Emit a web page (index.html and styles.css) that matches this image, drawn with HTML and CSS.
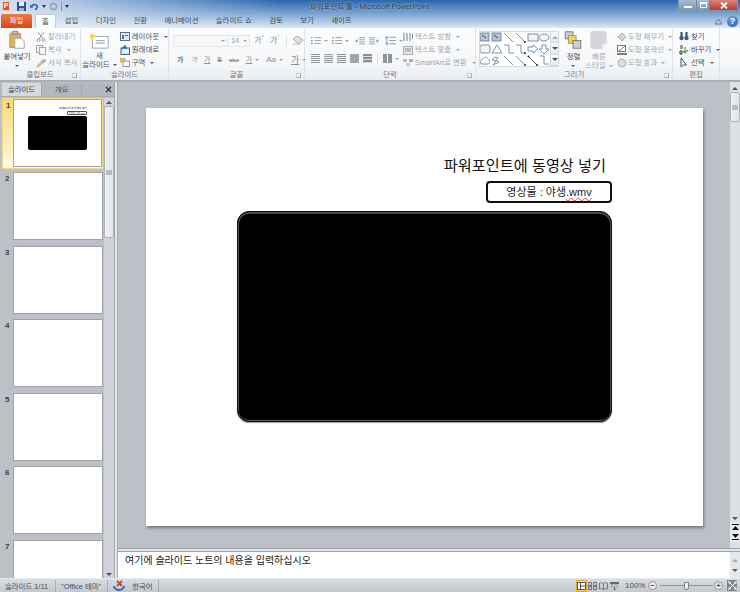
FILE: index.html
```html
<!DOCTYPE html>
<html lang="ko">
<head>
  <meta charset="UTF-8">
  <title>파워포인트 틀 - Microsoft PowerPoint</title>
  <link rel="stylesheet" href="styles.css">
</head>
<body>
<div class="app">

  <!-- 제목 표시줄 -->
  <div class="titlebar">
    <div class="quick">
      <span class="app-icon">P</span>
      <svg width="9" height="9" viewBox="0 0 9 9"><rect width="9" height="9" fill="#2f4f8f"/><rect x="2" y="0" width="5" height="4" fill="#e6eefa"/><rect x="2" y="6" width="5" height="3" fill="#9db4d8"/></svg>
      <svg class="undo" width="9" height="9" viewBox="0 0 11 9"><path d="M2 5C3 1 8 1 9 5 8 8 7 8 6 8" fill="none" stroke="#2b63ac" stroke-width="2"/><path d="M0 2l4 4H0z" fill="#2b63ac"/></svg>
      <span class="caret-dark"></span>
      <svg width="9" height="9" viewBox="0 0 9 9"><circle cx="4.500" cy="4.500" r="3" fill="none" stroke="#98a2ad" stroke-width="1.500"/></svg>
      <span class="quick-sep"></span>
      <span class="caret-dark"></span>
    </div>
    <div class="title">파워포인트 틀 - Microsoft PowerPoint</div>
    <div class="win-btns">
      <span class="win-btn"><i class="win-min"></i></span>
      <span class="win-btn win-mid"><i class="win-max"></i></span>
      <span class="win-btn win-close"><svg width="8" height="7" viewBox="0 0 8 7"><path d="M1 0.500l6 6M7 0.500l-6 6" stroke="#fff" stroke-width="1.800"/></svg></span>
    </div>
  </div>

  <!-- 탭 -->
  <div class="tabs">
    <span class="tab tab-file">파일</span>
    <span class="tab tab-on">홈</span>
    <span class="tab">삽입</span>
    <span class="tab">디자인</span>
    <span class="tab">전환</span>
    <span class="tab">애니메이션</span>
    <span class="tab">슬라이드 쇼</span>
    <span class="tab">검토</span>
    <span class="tab">보기</span>
    <span class="tab">셰이프</span>
    <span class="tab-right">
      <svg width="9" height="7" viewBox="0 0 9 7"><path d="M1 6L4.500 1 8 6z" fill="none" stroke="#6d7684"/></svg>
      <span class="help">?</span>
    </span>
  </div>

  <!-- 리본 -->
  <div class="ribbon">

    <div class="group g-clip">
      <div class="group-body">
        <div class="big-btn paste">
          <svg width="16" height="18" viewBox="0 0 22 25"><rect x="1" y="3" width="15" height="20" rx="1" fill="#e0b060" stroke="#a9793a"/><rect x="5" y="0.500" width="7" height="4" fill="#b8bcc2" stroke="#777"/><path d="M8 10h9l4 4v10H8z" fill="#fff" stroke="#8a8f96"/></svg>
          <span>붙여넣기</span>
          <span class="caret"></span>
        </div>
        <div class="small-col off">
          <div class="small-btn"><svg width="10" height="10" viewBox="0 0 10 10"><path d="M2 0l5 7M8 0L3 7" stroke="#9aa0a6" fill="none"/><circle cx="2.500" cy="8" r="1.500" fill="none" stroke="#9aa0a6"/><circle cx="7.500" cy="8" r="1.500" fill="none" stroke="#9aa0a6"/></svg>잘라내기</div>
          <div class="small-btn"><svg width="10" height="10" viewBox="0 0 10 10"><rect x="0.500" y="0.500" width="6" height="7" fill="#eee" stroke="#a5a9ae"/><rect x="3.500" y="2.500" width="6" height="7" fill="#f6f6f6" stroke="#a5a9ae"/></svg>복사<span class="caret"></span></div>
          <div class="small-btn"><svg width="10" height="10" viewBox="0 0 11 10"><path d="M0 9l5-5 2 2-5 4z" fill="#c4b98a"/><path d="M5 3l5-3 1 3-4 3z" fill="#a8adb3"/></svg>서식 복사</div>
        </div>
      </div>
      <div class="group-label">클립보드<i class="launcher"></i></div>
    </div>

    <div class="group g-slides">
      <div class="group-body">
        <div class="big-btn new-slide">
          <svg width="20" height="18" viewBox="0 0 24 19"><rect x="4" y="4" width="19" height="14" fill="#fff" stroke="#8c97a5"/><path d="M8 9h11M8 12h11" stroke="#a7b2c0" stroke-width="1.500"/><path d="M4 0l1 2 2-1-1 2 2 1-2 1 1 2-2-1-1 2-1-2-2 1 1-2-2-1 2-1-1-2 2 1z" fill="#f4cf4a"/></svg>
          <span class="new-label">새<br>슬라이드<i class="caret"></i></span>
        </div>
        <div class="small-col">
          <div class="small-btn"><svg width="10" height="9" viewBox="0 0 10 9"><rect x="0.500" y="0.500" width="9" height="8" fill="#dfe6f0" stroke="#5a6f8f"/><rect x="2" y="3" width="2" height="4" fill="#5a6f8f"/><rect x="5" y="3" width="3" height="1" fill="#5a6f8f"/></svg>레이아웃<span class="caret"></span></div>
          <div class="small-btn"><svg width="10" height="10" viewBox="0 0 10 10"><rect x="1" y="3" width="8.500" height="6.500" fill="#e8eef6" stroke="#3e5f8c"/><path d="M2 4l3-3v2h2" fill="none" stroke="#1f6fb0" stroke-width="1.500"/></svg>원래대로</div>
          <div class="small-btn"><svg width="10" height="9" viewBox="0 0 10 9"><rect x="0" y="0" width="5" height="4" fill="#f0c45a" stroke="#b98b2e" stroke-width="0.500"/><rect x="3" y="3" width="6.500" height="5.500" fill="#fff" stroke="#8c97a5"/></svg>구역<span class="caret"></span></div>
        </div>
      </div>
      <div class="group-label">슬라이드</div>
    </div>

    <div class="group g-font">
      <div class="group-body stack off">
        <div class="row">
          <div class="combo combo-font"><span class="caret"></span></div>
          <div class="combo combo-size">14<span class="caret"></span></div>
          <span class="glyph glyph-big">가<sup>^</sup></span>
          <span class="glyph">가<sup>ˇ</sup></span>
          <span class="row-sep"></span>
          <svg width="12" height="10" viewBox="0 0 12 10"><path d="M1 3l4-3 6 4-4 4z" fill="#e9d9e0" stroke="#a5a9ae"/><path d="M1 8h7" stroke="#b5b9be"/></svg>
        </div>
        <div class="row font-row">
          <span class="glyph strong">가</span>
          <span class="glyph slant">가</span>
          <span class="glyph under">가</span>
          <span class="glyph strike">S</span>
          <span class="glyph wide">abc</span>
          <span class="glyph stack-glyph">가<i class="caret"></i></span>
          <span class="glyph aa">Aa<i class="caret"></i></span>
          <span class="row-sep"></span>
          <span class="glyph under under-color">가<i class="caret"></i></span>
        </div>
      </div>
      <div class="group-label">글꼴<i class="launcher"></i></div>
    </div>

    <div class="group g-para">
      <div class="group-body off">
        <div class="stack para-left">
          <div class="row">
            <svg width="10" height="9" viewBox="0 0 12 9"><path d="M4 1h8M4 4.500h8M4 8h8" stroke="#8f949a"/><path d="M0 1h2M0 4.500h2M0 8h2" stroke="#6f8fb8" stroke-width="1.500"/></svg><i class="caret"></i>
            <svg class="gap-l" width="10" height="9" viewBox="0 0 12 9"><path d="M4 1h8M4 4.500h8M4 8h8" stroke="#8f949a"/><path d="M0 1h2M0 4.500h2M0 8h2" stroke="#8f949a" stroke-width="1.500"/></svg><i class="caret"></i>
            <span class="row-sep"></span>
            <svg width="10" height="10" viewBox="0 0 12 10"><path d="M5 1h7M5 3.500h7M5 6h7M5 8.500h7" stroke="#8f949a"/><path d="M3 3L0 5l3 2z" fill="#6a8fb5"/></svg>
            <svg class="gap-l" width="10" height="10" viewBox="0 0 12 10"><path d="M0 1h7M0 3.500h7M0 6h7M0 8.500h7" stroke="#8f949a"/><path d="M9 3l3 2-3 2z" fill="#6a8fb5"/></svg>
            <span class="row-sep"></span>
            <svg width="11" height="11" viewBox="0 0 12 11"><path d="M5 2h7M5 5.500h7M5 9h7" stroke="#8f949a"/><path d="M2 1v9M0 3l2-2 2 2M0 8l2 2 2-2" fill="none" stroke="#6a8fb5"/></svg><i class="caret"></i>
          </div>
          <div class="row">
            <span class="align a-left"></span>
            <span class="align a-center"></span>
            <span class="align a-right"></span>
            <span class="align a-just"></span>
            <span class="align a-dist"></span>
            <span class="row-sep"></span>
            <span class="align a-cols"></span><i class="caret"></i>
          </div>
        </div>
        <div class="small-col text-col">
          <div class="small-btn"><svg width="10" height="10" viewBox="0 0 10 10"><path d="M1 1v8M4 1v8M7 1v8" stroke="#8f949a" stroke-width="1.200"/><path d="M9.500 2v5" stroke="#6a8fb5"/></svg>텍스트 방향<span class="caret"></span></div>
          <div class="small-btn"><svg width="10" height="10" viewBox="0 0 10 10"><rect x="0.500" y="1.500" width="9" height="8" fill="#e8e8e8" stroke="#a5a9ae"/><path d="M2 4h6M2 6h6" stroke="#8f949a"/></svg>텍스트 맞춤<span class="caret"></span></div>
          <div class="small-btn"><svg width="10" height="9" viewBox="0 0 10 9"><rect x="0" y="1" width="4" height="3" fill="#b7bcc2"/><rect x="3" y="5" width="4" height="3" fill="#c7cbd0"/><rect x="6" y="1" width="4" height="3" fill="#a5abb2"/></svg>SmartArt로 변환<span class="caret"></span></div>
        </div>
      </div>
      <div class="group-label">단락<i class="launcher"></i></div>
    </div>

    <div class="group g-draw">
      <div class="group-body">
        <div class="gallery">
          <svg class="gallery-shapes" width="70" height="34" viewBox="2 1 70 34" fill="none" stroke="#6d84a3" stroke-width="0.900">
            <rect x="2" y="2" width="9" height="8" fill="#b6c4d6"/><path d="M4 4l4 3" stroke="#334"/>
            <rect x="14" y="2" width="9" height="8" fill="#b6c4d6"/><path d="M16 4l4 3" stroke="#334"/>
            <path d="M26 2l9 9M38 2l9 9"/><circle cx="47" cy="11" r="1" fill="#334" stroke="none"/>
            <rect x="50" y="3" width="10" height="7" fill="#f2f6fb"/><ellipse cx="66" cy="6.500" rx="5" ry="3.500" fill="#f2f6fb"/>
            <rect x="2" y="14" width="10" height="8" rx="2" fill="#f2f6fb"/><path d="M14 22l5-8 5 8z"/>
            <path d="M26 14h5v8h5M38 14h5v8h4"/><circle cx="47" cy="22" r="1" fill="#334" stroke="none"/>
            <path d="M50 16h5v-2l5 4-5 4v-2h-5z"/><path d="M64 14h4v4h3l-5 5-5-5h3z"/>
            <path d="M3 33c-2-4 2-5 3-6 2-2 3 0 4 1 2 0 2 5 0 5z"/><path d="M17 26l-3 3 4 1-3 4 6-3-3-2 2-2z"/>
            <path d="M26 25l9 9M38 25l9 9"/><circle cx="47" cy="34" r="1" fill="#334" stroke="none"/>
            <path d="M50 25l9 9" stroke="#334"/><circle cx="50.500" cy="25.500" r="1" fill="#334" stroke="none"/><circle cx="59" cy="34" r="1" fill="#334" stroke="none"/>
            <path d="M62 25h4v8h5"/>
          </svg>
          <div class="gallery-scroll">
            <span><i class="tri-up pale"></i></span>
            <span><i class="tri-down"></i></span>
            <span><i class="tri-down"></i></span>
          </div>
        </div>
        <div class="big-btn arrange">
          <svg width="18" height="18" viewBox="0 0 22 23"><rect x="1" y="1" width="10" height="9" fill="#c9ced5" stroke="#5f6a78"/><rect x="5" y="6" width="10" height="10" fill="#f4cf5a" stroke="#a98a2a"/><rect x="11" y="12" width="10" height="10" fill="#c9ced5" stroke="#5f6a78"/></svg>
          <span>정렬</span>
          <span class="caret"></span>
        </div>
        <div class="big-btn quick-style off">
          <svg width="17" height="18" viewBox="0 0 20 22"><path d="M3 0h14a3 3 0 0 1 3 3v12l-6 7H3a3 3 0 0 1-3-3V3a3 3 0 0 1 3-3z" fill="#d6d6da"/><path d="M14 22l1-6 5-1z" fill="#f2f2f4"/></svg>
          <span>빠른<br>스타일<i class="caret"></i></span>
        </div>
        <div class="small-col off shape-col">
          <div class="small-btn"><svg width="10" height="10" viewBox="0 0 10 10"><path d="M1 5l4-4 4 4-4 4z" fill="#d8d8d8" stroke="#a5a9ae"/></svg>도형 채우기<span class="caret"></span></div>
          <div class="small-btn"><svg width="10" height="10" viewBox="0 0 10 10"><rect x="0.500" y="0.500" width="8" height="6" fill="#fff" stroke="#777"/><path d="M2 6l7-6" stroke="#777"/><path d="M0 9h10" stroke="#555" stroke-width="1.500"/></svg>도형 윤곽선<span class="caret"></span></div>
          <div class="small-btn"><svg width="10" height="10" viewBox="0 0 10 10"><circle cx="5" cy="5" r="4" fill="#ddd" stroke="#b0b3b8"/></svg>도형 효과<span class="caret"></span></div>
        </div>
      </div>
      <div class="group-label">그리기<i class="launcher"></i></div>
    </div>

    <div class="group g-edit">
      <div class="group-body">
        <div class="small-col">
          <div class="small-btn"><svg width="10" height="9" viewBox="0 0 10 9"><circle cx="2.500" cy="6" r="2.200" fill="#3d5a86"/><circle cx="7.500" cy="6" r="2.200" fill="#3d5a86"/><rect x="1.500" y="0" width="2" height="4" fill="#33486b"/><rect x="6.500" y="0" width="2" height="4" fill="#33486b"/></svg>찾기</div>
          <div class="small-btn"><svg width="10" height="10" viewBox="0 0 10 10"><path d="M1 1h3M1 3h3" stroke="#333"/><path d="M6 2v6M4 6l2 2 3-3" fill="none" stroke="#4fa34f" stroke-width="1.200"/><path d="M1 6h2v3H1z" fill="none" stroke="#333"/></svg>바꾸기<span class="caret"></span></div>
          <div class="small-btn"><svg width="10" height="10" viewBox="0 0 10 10"><path d="M2 0v9l2.500-2 3 0z" fill="#eaf1fb" stroke="#3d5a86"/></svg>선택<span class="caret"></span></div>
        </div>
      </div>
      <div class="group-label">편집</div>
    </div>
  </div>

  <!-- 작업 영역 -->
  <div class="workspace">
    <div class="side">
      <div class="side-tabs">
        <span class="side-tab side-tab-on">슬라이드</span>
        <span class="side-tab">개요</span>
        <span class="side-close"><svg width="7" height="7" viewBox="0 0 7 7"><path d="M1 1l5 5M6 1L1 6" stroke="#3c4046" stroke-width="1.600"/></svg></span>
      </div>
      <div class="side-body">
        <div class="thumbs">
          <div class="thumb-row thumb-on">
            <span class="thumb-num">1</span>
            <div class="thumb">
              <p class="mini-title">파워포인트에 동영상 넣기</p>
              <p class="mini-box">영상물 : 야생.wmv</p>
              <div class="mini-video"></div>
            </div>
          </div>
          <div class="thumb-row"><span class="thumb-num">2</span><div class="thumb"></div></div>
          <div class="thumb-row"><span class="thumb-num">3</span><div class="thumb"></div></div>
          <div class="thumb-row"><span class="thumb-num">4</span><div class="thumb"></div></div>
          <div class="thumb-row"><span class="thumb-num">5</span><div class="thumb"></div></div>
          <div class="thumb-row"><span class="thumb-num">6</span><div class="thumb"></div></div>
          <div class="thumb-row"><span class="thumb-num">7</span><div class="thumb"></div></div>
        </div>
        <div class="scroll side-scroll">
          <span class="scroll-end"><i class="tri-up"></i></span>
          <div class="scroll-track"><div class="scroll-thumb side-thumb"></div></div>
          <span class="scroll-end"><i class="tri-down"></i></span>
        </div>
      </div>
    </div>

    <div class="main">
      <div class="stage">
        <div class="slide-wrap">
          <div class="slide">
            <h1 class="slide-title">파워포인트에 동영상 넣기</h1>
            <div class="slide-box">영상물 : 야생<u>.wmv</u></div>
            <div class="video"></div>
          </div>
        </div>
        <div class="scroll main-scroll">
          <span class="scroll-end"><i class="tri-up"></i></span>
          <div class="scroll-track"><div class="scroll-thumb main-thumb"></div></div>
          <span class="scroll-end"><i class="tri-down"></i></span>
          <span class="page-btn"><svg width="7" height="6" viewBox="0 0 7 6"><path d="M0 0h7v1H0zM3.500 2L7 6H0z" fill="#111"/></svg></span>
          <span class="page-btn"><svg width="7" height="6" viewBox="0 0 7 6"><path d="M0 5h7v1H0zM3.500 4L7 0H0z" fill="#111"/></svg></span>
        </div>
      </div>
      <div class="notes">
        <div class="notes-text">여기에 슬라이드 노트의 내용을 입력하십시오</div>
        <div class="scroll notes-scroll">
          <span class="scroll-end"><i class="tri-up pale"></i></span>
          <span class="scroll-end"><i class="tri-down pale"></i></span>
        </div>
      </div>
    </div>
  </div>

  <!-- 상태 표시줄 -->
  <div class="status">
    <span class="status-item st-count">슬라이드 1/11</span>
    <span class="status-item st-theme">"Office 테마"</span>
    <span class="status-item st-icon">
      <svg width="12" height="11" viewBox="0 0 12 11"><path d="M1 6a5 4 0 0 0 10 0" fill="none" stroke="#2f63ad" stroke-width="2"/><path d="M4 1l5 5M9 1L4 6" stroke="#d6402b" stroke-width="1.800"/></svg>
    </span>
    <span class="status-item st-lang">한국어</span>
    <div class="status-right">
      <span class="view-btn view-on"><svg width="9" height="8" viewBox="0 0 9 8"><rect x="0.500" y="0.500" width="8" height="7" fill="#fff" stroke="#555"/><path d="M3.500 0v8M3.500 4H9" stroke="#555"/></svg></span>
      <span class="view-btn"><svg width="9" height="8" viewBox="0 0 9 8" fill="none" stroke="#777"><rect x="0.500" y="0.500" width="3" height="3"/><rect x="5.500" y="0.500" width="3" height="3"/><rect x="0.500" y="4.500" width="3" height="3"/><rect x="5.500" y="4.500" width="3" height="3"/></svg></span>
      <span class="view-btn"><svg width="9" height="8" viewBox="0 0 9 8" fill="none" stroke="#777"><path d="M4.500 1.500C3 .5 1.500.5.500 1v6c1-.5 2.500-.5 4 .5 1.500-1 3-1 4-.5V1c-1-.5-2.500-.5-4 .5zM4.500 1.500v6"/></svg></span>
      <span class="view-btn"><svg width="9" height="8" viewBox="0 0 9 8"><rect x="0" y="0" width="9" height="2" fill="#666"/><rect x="1.500" y="2" width="6" height="3" fill="#ccc" stroke="#777" stroke-width="0.500"/><path d="M4.500 5v3M3 8h3" stroke="#666"/></svg></span>
      <span class="zoom-val">100%</span>
      <span class="zoom-btn">−</span>
      <div class="zoom-track"><span class="zoom-handle"></span></div>
      <span class="zoom-btn">+</span>
      <span class="fit-btn"><svg width="9" height="9" viewBox="0 0 9 9"><path d="M0 0l3 1-2 2zM9 0L6 1l2 2zM0 9l3-1-2-2zM9 9L6 8l2-2z" fill="#fff"/><path d="M1 1l7 7M8 1L1 8" stroke="#fff"/></svg></span>
    </div>
  </div>
</div>
</body>
</html>
```

FILE: styles.css
```css
* {
    box-sizing: border-box;
}
html, body {
    margin: 0;
    padding: 0;
}
body {
    width: 740px;
    height: 592px;
    overflow: hidden;
    font-family: "Liberation Sans", "Noto Sans CJK KR", sans-serif;
    font-size: 7.400px;
    color: #4a4e55;
}
svg {
    display: block;
    flex: none;
}
.app {
    display: flex;
    flex-direction: column;
    height: 592px;
    background:
        linear-gradient(90deg, rgba(230, 238, 247, 0.9), rgba(230, 238, 247, 0) 38%),
        linear-gradient(#2a66ad, #6f9ccd 12px, #dde8f3 28px);
}

/* 제목 표시줄 */
.titlebar {
    display: flex;
    align-items: flex-start;
    height: 14px;
    flex: none;
}
.quick {
    display: flex;
    align-items: center;
    gap: 3px;
    width: 200px;
    height: 12px;
    padding-left: 2px;
}
.app-icon {
    width: 8px;
    height: 10px;
    margin-right: 4px;
    background: #d8562b;
    border: 1px solid #f3d4b4;
    color: #fff;
    font-size: 7px;
    font-weight: bold;
    line-height: 8px;
    text-align: center;
}
.undo {
    margin-left: 1px;
}
.quick-sep {
    width: 1px;
    height: 9px;
    background: #7f97b5;
}
.caret-dark {
    width: 0;
    height: 0;
    border: 2px solid transparent;
    border-top: 3px solid #30343a;
    border-bottom: 0;
}
.title {
    width: 340px;
    padding-top: 2px;
    padding-left: 110px;
    color: #33383f;
    line-height: 10px;
    white-space: nowrap;
    text-shadow: 0 0 3px rgba(255, 255, 255, 0.7);
}
.win-btns {
    display: flex;
    margin-left: auto;
    margin-right: 2px;
    height: 11px;
    border: 1px solid #7f93ab;
    border-top: 0;
    border-radius: 0 0 3px 3px;
}
.win-btn {
    display: flex;
    align-items: center;
    justify-content: center;
    width: 18px;
    background: linear-gradient(#a8bbd2, #7d96b4);
    border-right: 1px solid #6f84a0;
}
.win-mid {
    width: 13px;
}
.win-min {
    width: 8px;
    height: 2px;
    margin-top: 3px;
    background: #fff;
}
.win-max {
    width: 7px;
    height: 6px;
    border: 1px solid #fff;
    border-top-width: 2px;
}
.win-close {
    width: 27px;
    background: linear-gradient(#d9867b, #b9392c);
    border-right: 0;
}

/* 탭 */
.tabs {
    display: flex;
    align-items: flex-end;
    height: 14px;
    flex: none;
    padding-left: 1px;
}
.tab {
    height: 14px;
    padding: 0 8.700px;
    line-height: 14px;
    color: #454a52;
    white-space: nowrap;
}
.tab-file {
    width: 31px;
    padding: 0;
    margin-right: 3px;
    background: linear-gradient(#ee7a3d, #d8471c);
    border-radius: 2px 2px 0 0;
    color: #fff;
    text-align: center;
}
.tab-on {
    width: 21px;
    padding: 0;
    background: linear-gradient(#fff, #f7f8fa);
    border: 1px solid #c3cbd6;
    border-bottom: 0;
    border-radius: 2px 2px 0 0;
    line-height: 13px;
    text-align: center;
}
.tab-right {
    display: flex;
    align-items: center;
    gap: 4px;
    margin-left: auto;
    margin-right: 2px;
    height: 14px;
}
.help {
    width: 11px;
    height: 11px;
    border-radius: 50%;
    background: radial-gradient(circle at 40% 30%, #6ea2e0, #1f5db2);
    color: #fff;
    font-size: 9px;
    font-weight: bold;
    line-height: 11px;
    text-align: center;
}

/* 리본 */
.ribbon {
    display: flex;
    height: 54px;
    flex: none;
    background: linear-gradient(#fcfdfe, #f4f6f8 70%, #e9edf1);
    border-bottom: 2px solid #a9aeb5;
}
.group {
    display: flex;
    flex-direction: column;
    border-right: 1px solid #dfe3e8;
    flex: none;
}
.group-body {
    display: flex;
    flex: 1;
    min-height: 0;
}
.group-label {
    position: relative;
    height: 10px;
    flex: none;
    color: #6c7480;
    line-height: 10px;
    text-align: center;
}
.launcher {
    position: absolute;
    right: 3px;
    top: 3px;
    width: 5px;
    height: 5px;
    border: 1px solid #a8afb8;
    border-top-color: #ccd1d7;
    border-left-color: #ccd1d7;
}
.g-clip { width: 81px; }
.g-slides { width: 88px; }
.g-font { width: 136px; }
.g-para { width: 171px; }
.g-draw { width: 197px; }
.g-edit { width: 47px; }

.big-btn {
    display: flex;
    flex-direction: column;
    align-items: center;
    line-height: 9px;
    text-align: center;
    white-space: nowrap;
}
.big-btn span {
    display: block;
}
.paste {
    width: 34px;
    padding-top: 3px;
}
.paste svg {
    margin-bottom: 3px;
}
.big-btn > .caret {
    margin: 4px 0 0 0;
}
.new-slide {
    width: 36px;
    margin-left: 1px;
    padding-top: 4px;
}
.new-slide svg {
    margin-bottom: 1px;
}
.arrange {
    width: 26px;
    margin-left: 2px;
    padding-top: 3px;
}
.arrange svg {
    margin-bottom: 3px;
}
.quick-style {
    width: 26px;
    padding-top: 3px;
}
.quick-style svg {
    margin-bottom: 3px;
}
.small-col {
    display: flex;
    flex-direction: column;
    padding-top: 2px;
    white-space: nowrap;
}
.small-btn {
    display: flex;
    align-items: center;
    gap: 2px;
    height: 13px;
    line-height: 13px;
}
.off {
    color: #a2a7ad;
}
.caret {
    display: inline-block;
    width: 0;
    height: 0;
    margin-left: 3px;
    border: 2px solid transparent;
    border-top: 2px solid #555a60;
    border-bottom: 0;
    vertical-align: middle;
}
.off .caret {
    border-top-color: #a2a7ad;
}
.g-clip .small-col {
    margin-left: 2px;
}
.g-slides .small-col {
    margin-left: 3px;
}

/* 글꼴 */
.stack {
    display: flex;
    flex-direction: column;
}
.g-font .stack {
    padding: 6px 0 0 4px;
    gap: 6px;
}
.row {
    display: flex;
    align-items: center;
    height: 13px;
}
.combo {
    display: flex;
    align-items: center;
    justify-content: flex-end;
    height: 12px;
    padding-right: 2px;
    background: #f7f8fa;
    border: 1px solid #e4e7eb;
}
.combo-font {
    width: 60px;
}
.combo-size {
    width: 25px;
    justify-content: space-between;
    padding-left: 3px;
    margin-right: 4px;
    margin-left: -1px;
}
.glyph {
    display: inline-flex;
    align-items: center;
    margin-right: 6px;
    color: #8b9097;
    font-size: 8px;
    line-height: 10px;
}
.glyph sup {
    font-size: 5px;
    line-height: 5px;
    margin-top: -6px;
}
.row-sep {
    width: 1px;
    height: 11px;
    margin: 0 5px 0 1px;
    background: #dfe3e8;
}
.font-row {
    padding-left: 4px;
}
.font-row .glyph {
    margin-right: 7px;
    font-size: 7px;
}
.strong {
    font-weight: bold;
    color: #70757c;
}
.slant {
    font-style: italic;
}
.under {
    text-decoration: underline;
}
.strike {
    font-weight: bold;
    text-decoration: line-through;
}
.wide {
    font-size: 6px !important;
    text-decoration: line-through;
}
.font-row .aa {
    font-size: 8px;
    margin-right: 2px;
}
.font-row .stack-glyph {
    text-decoration: underline;
}
.under-color {
    font-size: 9px !important;
}

/* 단락 */
.g-para .group-body {
    padding-left: 6px;
}
.para-left {
    width: 90px;
    padding-top: 6px;
    gap: 5px;
}
.gap-l {
    margin-left: 4px;
}
.align {
    width: 9px;
    height: 9px;
    margin-right: 4px;
    background: repeating-linear-gradient(#8f949a 0 1px, transparent 1px 2px);
}
.a-center { background: repeating-linear-gradient(#a1a6ac 0 1px, #e1e3e6 1px 2px); }
.a-right { background: repeating-linear-gradient(#8f949a 0 1px, #eef0f2 1px 2px); }
.a-just { background: #a1a6ac; }
.a-dist { background: repeating-linear-gradient(#8a8f95 0 2px, #d6d9dc 2px 3px); }
.a-cols {
    margin-right: 0;
    background: linear-gradient(90deg, #8f949a 0 4px, transparent 4px 5px, #8f949a 5px);
}
.text-col {
    margin-left: 2px;
}

/* 그리기 */
.gallery {
    display: flex;
    height: 36px;
    margin: 3px 0 0 3px;
    background: #fff;
    border: 1px solid #d4dae2;
}
.gallery-scroll {
    display: flex;
    flex-direction: column;
    width: 8px;
    border-left: 1px solid #d4dae2;
}
.gallery-scroll span {
    display: flex;
    align-items: center;
    justify-content: center;
    flex: 1;
    background: linear-gradient(#f7f9fb, #e7ebf0);
    border-bottom: 1px solid #d4dae2;
}
.shape-col {
    margin-left: 5px;
}
.shape-col .small-btn {
    gap: 1px;
}

/* 편집 */
.g-edit .small-col {
    padding-left: 6px;
}

/* 작업 영역 */
.workspace {
    display: flex;
    flex: 1;
    min-height: 0;
    background: #e2e5e9;
}
.side {
    display: flex;
    flex-direction: column;
    width: 115px;
    flex: none;
    background: #bdc1c7;
    border-right: 1px solid #a5a9af;
}
.side-tabs {
    display: flex;
    height: 14px;
    flex: none;
    margin-top: 1px;
    padding-left: 2px;
    background: #b3b8be;
    border-bottom: 1px solid #a9adb3;
}
.side-tab {
    width: 40px;
    line-height: 13px;
    text-align: center;
    border-right: 1px solid #a2a7ad;
    color: #50565e;
}
.side-tab-on {
    background: #d5d8dc;
    color: #3c4046;
}
.side-close {
    display: flex;
    align-items: center;
    margin-left: auto;
    margin-right: 2px;
}
.side-body {
    display: flex;
    flex: 1;
    min-height: 0;
    padding-top: 1px;
}
.thumbs {
    display: flex;
    flex-direction: column;
    gap: 3px;
    width: 104px;
    height: 480px;
    overflow: hidden;
    flex: none;
    padding-left: 2px;
}
.thumb-row {
    display: flex;
    justify-content: space-between;
    flex: none;
    width: 101px;
    height: 70.500px;
    padding: 1.500px 1px 2px 0;
}
.thumb-on {
    background: linear-gradient(#fcd977, #fdeeb8 70%, #fffbe8);
    border: 1px solid #f2d98a;
    padding: 1px 1px 1px 0;
}
.thumb-num {
    width: 11px;
    padding-left: 3px;
    color: #3c4046;
    font-size: 8px;
    font-weight: bold;
    line-height: 11px;
}
.thumb {
    display: flex;
    flex-direction: column;
    align-items: flex-end;
    width: 88px;
    height: 66px;
    padding: 7px 14px 0 0;
    background: #fff;
    box-shadow: 0 0 0 1px #9fa3a9;
}
.mini-title {
    margin: 0;
    color: #222;
    font-size: 2.600px;
    line-height: 3px;
    white-space: nowrap;
}
.mini-box {
    width: 20px;
    height: 4px;
    margin: 1px 0 0 0;
    border: 1px solid #555;
    border-radius: 1px;
    overflow: hidden;
    color: #444;
    font-size: 2px;
    line-height: 2px;
    text-align: center;
    white-space: nowrap;
}
.mini-video {
    width: 59px;
    height: 34px;
    margin-top: 1px;
    background: #000;
    border-radius: 2px;
}

/* 스크롤바 */
.scroll {
    display: flex;
    flex-direction: column;
    flex: none;
    background: #e0e4e9;
}
.scroll-end {
    display: flex;
    align-items: center;
    justify-content: center;
    height: 8px;
    flex: none;
}
.scroll-track {
    flex: 1;
    min-height: 0;
}
.scroll-thumb {
    background:
        linear-gradient(#b9bdc3, #b9bdc3) center / 6px 5px no-repeat,
        linear-gradient(90deg, #f0f2f5, #dfe3e8);
    border: 1px solid #aeb3ba;
    border-radius: 2px;
}
.tri-up, .tri-down {
    display: block;
    width: 0;
    height: 0;
    border: 3px solid transparent;
}
.tri-up { border-top: 0; border-bottom: 3px solid #4e5359; }
.tri-down { border-bottom: 0; border-top: 3px solid #4e5359; }
.tri-up.pale { border-bottom-color: #a8adb3; }
.tri-down.pale { border-top-color: #5e6369; }
.side-scroll {
    width: 10px;
    height: 480px;
    background: #cfd3d9;
}
.side-thumb {
    height: 132px;
}

/* 본문 */
.main {
    display: flex;
    flex-direction: column;
    flex: 1;
    min-width: 0;
    margin-left: 2px;
    border-left: 1px solid #a9adb3;
}
.stage {
    display: flex;
    height: 467px;
    flex: none;
    background: #bdc1c7;
    border-bottom: 1px solid #9fa3a9;
}
.slide-wrap {
    flex: 1;
    min-width: 0;
    padding: 26px 0 0 28px;
}
.slide {
    display: flex;
    flex-direction: column;
    align-items: flex-end;
    width: 557px;
    height: 418px;
    padding: 49px 91px 0 0;
    background: #fff;
    box-shadow: 1px 2px 3px rgba(70, 74, 80, 0.65);
}
.slide-title {
    margin: 0 6px 7px 0;
    color: #111;
    font-size: 15.200px;
    font-weight: normal;
    line-height: 17px;
}
.slide-box {
    width: 126px;
    height: 22px;
    border: 2px solid #111;
    border-radius: 4px;
    color: #222;
    font-size: 11px;
    line-height: 18px;
    text-align: center;
}
.slide-box u {
    text-decoration: underline wavy #d8433a 1px;
}
.video {
    width: 375px;
    height: 211px;
    margin-top: 8px;
    background: #000;
    border: 1px solid #111;
    border-radius: 12px;
    box-shadow:
        inset 0 1px 0 1px #4a4a4a,
        inset 0 -2px 1px -1px #6a6a6a,
        0 1px 1px #999;
}
.main-scroll {
    width: 10px;
    padding-top: 2px;
    background: #dcdfe4;
}
.main-thumb {
    height: 30px;
}
.page-btn {
    display: flex;
    align-items: center;
    justify-content: center;
    height: 10px;
    flex: none;
    background: #e8eaee;
}
.main-scroll .page-btn:last-child {
    margin-bottom: 6px;
}
.notes {
    display: flex;
    flex: 1;
    min-height: 0;
    margin-top: 2px;
    background: #fff;
    border-top: 1px solid #9fa3a9;
}
.notes-text {
    flex: 1;
    padding: 3px 0 0 7px;
    color: #222;
    font-size: 10px;
    line-height: 12px;
}
.notes-scroll {
    width: 10px;
    justify-content: space-between;
    padding: 4px 0;
    background: #e4e7eb;
}

/* 상태 표시줄 */
.status {
    display: flex;
    align-items: center;
    height: 14px;
    flex: none;
    background: linear-gradient(#d9dde2, #c3c8ce);
    border-top: 1px solid #e8ebee;
}
.status-item {
    display: flex;
    align-items: center;
    height: 12px;
    border-right: 1px solid #a9adb3;
    white-space: nowrap;
}
.st-count {
    padding: 0 7px 0 5px;
}
.st-theme {
    padding: 0 6px 0 5px;
}
.st-icon {
    padding-left: 5px;
    border-right: 0;
}
.st-lang {
    padding: 0 5px 0 7px;
}
.status-right {
    display: flex;
    align-items: center;
    height: 13px;
    margin-left: auto;
}
.view-btn {
    display: flex;
    align-items: center;
    justify-content: center;
    width: 11px;
    height: 12px;
}
.view-on {
    background: linear-gradient(#fde9a7, #f9cc5c);
    border: 1px solid #d7a93a;
}
.zoom-val {
    width: 21px;
    margin: 0 2px 0 5px;
    font-size: 8px;
    white-space: nowrap;
}
.zoom-btn {
    width: 9px;
    height: 9px;
    background: #eef0f3;
    border: 1px solid #8f949a;
    border-radius: 50%;
    font-size: 8px;
    font-weight: bold;
    line-height: 7px;
    text-align: center;
}
.zoom-track {
    display: flex;
    justify-content: center;
    align-items: center;
    width: 53px;
    height: 1px;
    margin: 0 1px 0 3px;
    background: #8f949a;
}
.zoom-handle {
    width: 5px;
    height: 8px;
    background: #eef0f3;
    border: 1px solid #7d8288;
    border-radius: 1px 1px 3px 3px;
}
.fit-btn {
    display: flex;
    align-items: center;
    justify-content: center;
    width: 10px;
    height: 11px;
    margin: 0 3px 0 4px;
    background: #7f858c;
}
```
